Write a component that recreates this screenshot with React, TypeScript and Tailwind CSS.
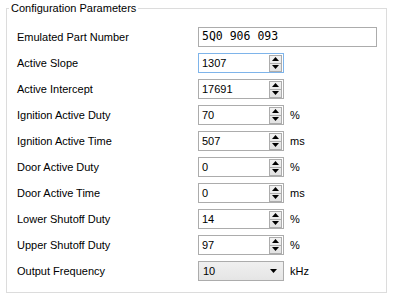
import React from "react";

const font = { fontFamily: '"Liberation Sans", Arial, sans-serif' };

function SpinButtons() {
  return (
    <div className="flex flex-col w-[13px] h-[17px] mr-[1px] border border-[#acacac] bg-gradient-to-b from-[#f2f2f2] to-[#e2e2e2]">
      <div className="flex-1 flex items-center justify-center border-b border-[#acacac]">
        <svg width="7" height="4" viewBox="0 0 7 4"><path d="M3.5 0 L7 4 L0 4 Z" fill="#000" /></svg>
      </div>
      <div className="flex-1 flex items-center justify-center">
        <svg width="7" height="4" viewBox="0 0 7 4"><path d="M0 0 L7 0 L3.5 4 Z" fill="#000" /></svg>
      </div>
    </div>
  );
}

function Spin({ value, focused }: { value: string; focused?: boolean }) {
  return (
    <div
      className={`flex items-center w-[86px] h-[20px] border bg-white ${focused ? "border-[#7eb4ea]" : "border-[#acacac]"}`}
    >
      <span className="flex-1 pl-[3px] text-[11px] text-black leading-none">{value}</span>
      <SpinButtons />
    </div>
  );
}

function Row({ label, children, unit }: { label: string; children: React.ReactNode; unit?: string }) {
  return (
    <div className="flex items-center h-[20px]">
      <div className="w-[181px] text-[11px] text-black leading-none">{label}</div>
      {children}
      {unit && <div className="ml-[6px] text-[11px] text-black leading-none">{unit}</div>}
    </div>
  );
}

export default function App() {
  return (
    <div className="w-[394px] h-[298px] bg-white pl-[6px] pt-[1px]" style={font}>
      <fieldset className="w-[381px] h-[292px] border border-[#dcdcdc] px-0 pt-[12px]">
        <legend className="ml-[2px] px-[2px] text-[11px] leading-[14px] text-black">Configuration Parameters</legend>
        <div className="flex flex-col gap-[6px] pl-[10px]">
          <Row label="Emulated Part Number">
            <div className="flex items-center w-[179px] h-[20px] border border-[#acacac] bg-white pl-[3px]">
              <span className="text-[11.5px] text-black leading-none" style={{ fontFamily: '"DejaVu Sans Mono", monospace' }}>
                5Q0 906 093
              </span>
            </div>
          </Row>
          <Row label="Active Slope"><Spin value="1307" focused /></Row>
          <Row label="Active Intercept"><Spin value="17691" /></Row>
          <Row label="Ignition Active Duty" unit="%"><Spin value="70" /></Row>
          <Row label="Ignition Active Time" unit="ms"><Spin value="507" /></Row>
          <Row label="Door Active Duty" unit="%"><Spin value="0" /></Row>
          <Row label="Door Active Time" unit="ms"><Spin value="0" /></Row>
          <Row label="Lower Shutoff Duty" unit="%"><Spin value="14" /></Row>
          <Row label="Upper Shutoff Duty" unit="%"><Spin value="97" /></Row>
          <Row label="Output Frequency" unit="kHz">
            <div className="flex items-center w-[86px] h-[20px] border border-[#acacac] bg-gradient-to-b from-[#f0f0f0] to-[#e5e5e5]">
              <span className="flex-1 pl-[4px] text-[11px] text-black leading-none">10</span>
              <svg className="mr-[6px]" width="7" height="4" viewBox="0 0 7 4"><path d="M0 0 L7 0 L3.5 4 Z" fill="#000" /></svg>
            </div>
          </Row>
        </div>
      </fieldset>
    </div>
  );
}
